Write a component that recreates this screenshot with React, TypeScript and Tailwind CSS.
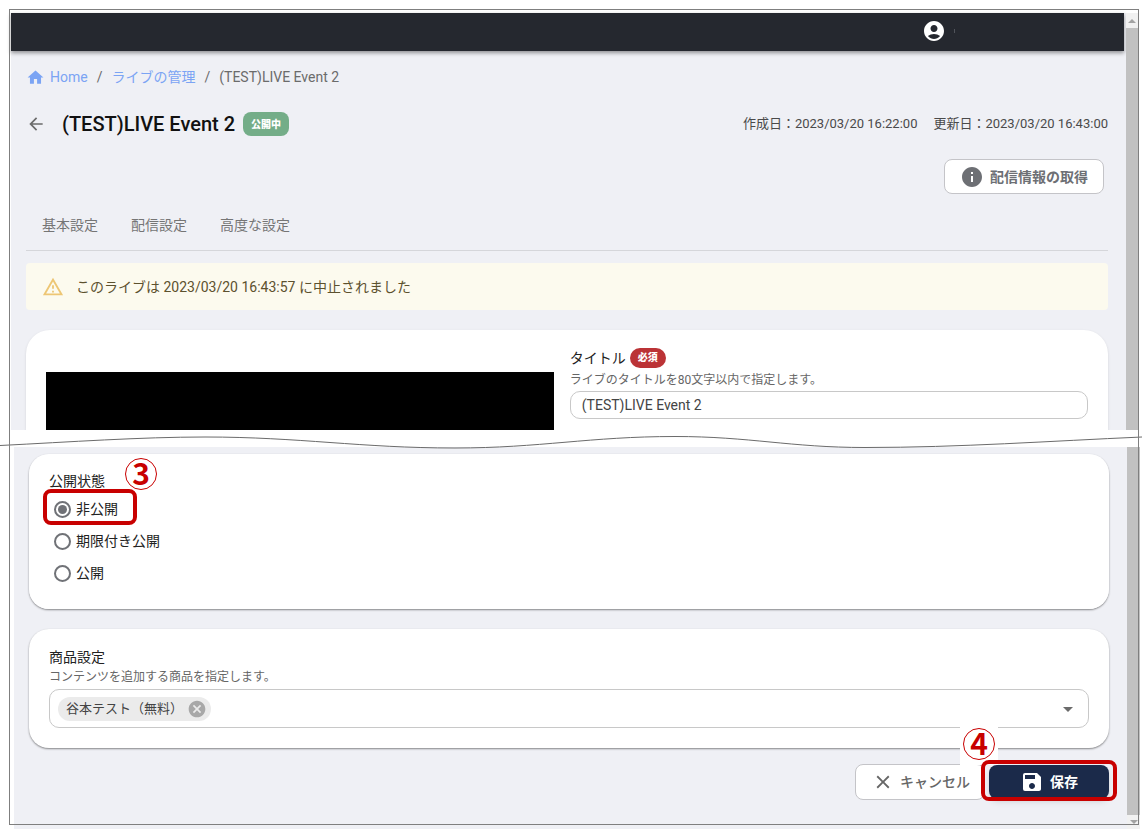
import { useState } from "react";
import type { ReactNode } from "react";
import {
  MdAccountCircle,
  MdArrowBack,
  MdArrowDropDown,
  MdCancel,
  MdClose,
  MdHome,
  MdInfo,
  MdOutlineReportProblem,
  MdSave,
} from "react-icons/md";

const TABS = ["基本設定", "配信設定", "高度な設定"];

const STATUSES = [
  { value: "private", label: "非公開" },
  { value: "limited", label: "期限付き公開" },
  { value: "public", label: "公開" },
];

function StepNumber({ children }: { children: ReactNode }) {
  return (
    <span className="flex size-8 items-center justify-center rounded-full border border-[#c80000] bg-white pb-1 font-['Noto_Sans_CJK_JP',sans-serif] text-[30px] leading-none font-bold text-[#c80000]">
      {children}
    </span>
  );
}

function Highlight({ className }: { className: string }) {
  return (
    <span
      className={`pointer-events-none absolute rounded-lg border-4 border-[#c80000] ${className}`}
    />
  );
}

function ScrollArrow({ down }: { down?: boolean }) {
  return (
    <svg viewBox="0 0 8 4" className="h-1 w-2 fill-[#a3a3a3]" aria-hidden="true">
      <path d={down ? "M0 0h8L4 4z" : "M0 4h8L4 0z"} />
    </svg>
  );
}

function Breadcrumbs() {
  return (
    <nav className="flex h-5 items-center text-sm text-[#6b6b6b]">
      <a href="#home" className="flex items-center gap-[5px] text-[#7ba4f4]">
        <MdHome className="size-[19px]" />
        Home
      </a>
      <span className="mx-[9px]">/</span>
      <a href="#lives" className="text-[#7ba4f4]">
        ライブの管理
      </a>
      <span className="mx-[9px]">/</span>
      <span>(TEST)LIVE Event 2</span>
    </nav>
  );
}

function TitleRow() {
  return (
    <div className="mt-[23px] flex h-7 items-center">
      <button type="button" aria-label="戻る" className="text-[#6b6b6b]">
        <MdArrowBack className="size-5" />
      </button>
      <h1 className="ml-4 text-xl font-medium text-[#111]">(TEST)LIVE Event 2</h1>
      <span className="ml-2 flex h-6 items-center rounded-lg bg-[#74ad88] px-2 text-[10px] font-black text-white">
        公開中
      </span>
      <div className="ml-auto flex gap-4 text-[13px] text-[#4a4a4a]">
        <span>作成日：2023/03/20 16:22:00</span>
        <span>更新日：2023/03/20 16:43:00</span>
      </div>
    </div>
  );
}

function TitleCard() {
  const [title, setTitle] = useState("(TEST)LIVE Event 2");

  return (
    <div className="mt-5 grid grid-cols-[49fr_50fr] gap-4 rounded-t-3xl bg-white px-5 pt-4 shadow">
      <div className="mt-[26px] h-[58px] bg-black" />
      <div>
        <div className="flex h-6 items-center gap-1 text-sm text-[#222]">
          <label htmlFor="title">タイトル</label>
          <span className="flex h-5 items-center rounded-full bg-[#bb3336] px-2 text-[10px] font-black text-white">
            必須
          </span>
        </div>
        <p className="text-xs leading-5 text-[#666]">ライブのタイトルを80文字以内で指定します。</p>
        <input
          id="title"
          value={title}
          onChange={(e) => setTitle(e.target.value)}
          className="mt-px block h-7 w-full rounded-[10px] border border-[#c8c8c8] px-[11px] text-sm text-[#444]"
        />
      </div>
    </div>
  );
}

function StatusCard() {
  const [status, setStatus] = useState("private");

  return (
    <fieldset className="relative rounded-[20px] bg-white px-5 pt-[17px] pb-5 shadow-[0_1px_2px_rgba(0,0,0,0.45)]">
      <legend className="float-left mb-[2px] w-full text-sm leading-5 text-[#222]">公開状態</legend>
      <div className="clear-both">
        {STATUSES.map((s) => (
          <label key={s.value} className="flex h-8 items-center gap-[5px] pl-[5px] text-sm text-[#222]">
            <input
              type="radio"
              name="status"
              value={s.value}
              checked={status === s.value}
              onChange={() => setStatus(s.value)}
              className="size-[17px] appearance-none rounded-full border-2 border-[#707277] bg-clip-content p-[2px] checked:bg-[#707277]"
            />
            {s.label}
          </label>
        ))}
      </div>
      <Highlight className="top-[35px] left-[14px] h-9 w-[94px]" />
      <div className="absolute top-1 left-24">
        <StepNumber>3</StepNumber>
      </div>
    </fieldset>
  );
}

function ProductCard() {
  return (
    <section className="mt-5 rounded-[20px] bg-white px-5 pt-[18px] pb-5 shadow-[0_1px_2px_rgba(0,0,0,0.45)]">
      <label htmlFor="products" className="block text-sm leading-5 text-[#222]">
        商品設定
      </label>
      <p className="text-xs leading-5 text-[#666]">コンテンツを追加する商品を指定します。</p>
      <div className="mt-0.5 flex h-[39px] items-center rounded-[10px] border border-[#c8c8c8] px-2">
        <span className="flex h-6 items-center gap-1 rounded-full bg-[#ebebeb] pr-1 pl-2 text-[13px] text-[#444]">
          谷本テスト（無料）
          <button type="button" aria-label="削除" className="text-[#a8a8a8]">
            <MdCancel className="size-5" />
          </button>
        </span>
        <input id="products" role="combobox" className="h-full min-w-0 flex-1 outline-none" />
        <button type="button" aria-label="開く" className="text-[#6b6b6b]">
          <MdArrowDropDown className="size-6" />
        </button>
      </div>
    </section>
  );
}

function Actions() {
  return (
    <div className="relative mt-4 flex items-center justify-end">
      <button
        type="button"
        className="flex h-9 items-center gap-1.5 rounded-lg border border-[#c4c4c8] bg-white pr-3.5 pl-4 text-sm font-medium text-[#666]"
      >
        <MdClose className="size-[22px]" />
        キャンセル
      </button>
      <button
        type="button"
        className="ml-1 flex h-[34px] w-[120px] items-center justify-center gap-1.5 rounded-lg bg-[#1b2a4a] text-sm font-bold text-white shadow-md"
      >
        <MdSave className="size-6" />
        保存
      </button>
      <div className="absolute -top-[37px] right-[111px] bg-white px-[3px] pt-px pb-[5px]">
        <StepNumber>4</StepNumber>
      </div>
      <Highlight className="-top-1 -right-2 h-[41px] w-[136px]" />
    </div>
  );
}

export default function App() {
  return (
    <div className="relative min-h-screen bg-white pt-[13px] font-[Roboto,'Noto_Sans_CJK_JP',sans-serif]">
      <div className="mr-1 ml-[11px] flex">
        <div className="min-w-0 flex-1 bg-[#eff0f5]">
          <header className="mr-0.5 flex h-[38px] items-center justify-end bg-[#25282f] pr-[169px] pb-[2px] text-white shadow-[0_2px_4px_rgba(0,0,0,0.4)]">
            <MdAccountCircle className="size-6" />
            <span className="ml-2 h-1 w-px bg-[#50535a]" />
          </header>
          <main className="pt-4 pr-[18px] pl-[15px]">
            <Breadcrumbs />
            <TitleRow />
            <div className="mt-[21px] flex justify-end pr-1">
              <button
                type="button"
                className="flex h-[35px] items-center gap-1.5 rounded-lg border border-[#c4c4c8] bg-white px-[15px] text-sm font-bold text-[#6d6f74]"
              >
                <MdInfo className="size-6" />
                配信情報の取得
              </button>
            </div>
            <div className="mt-[6px] flex h-[51px] items-center gap-[33px] border-b border-[#d5d6da] px-4 text-sm text-[#757575]">
              {TABS.map((tab) => (
                <button key={tab} type="button">
                  {tab}
                </button>
              ))}
            </div>
            <div className="mt-3 flex h-[47px] items-center gap-3 rounded bg-[#fcfaee] px-4 text-sm text-[#5c512e]">
              <MdOutlineReportProblem className="size-[22px] text-[#edc674]" />
              <span>このライブは 2023/03/20 16:43:57 に中止されました</span>
            </div>
            <TitleCard />
          </main>
        </div>
        <div className="flex w-3 flex-col bg-[#c1c1c1]">
          <div className="flex h-[15px] items-center justify-center bg-[#f1f1f1]">
            <ScrollArrow />
          </div>
        </div>
      </div>

      {/* page break */}
      <div className="relative z-10 bg-white">
        <svg
          viewBox="0 0 1142 17"
          preserveAspectRatio="none"
          className="block h-[17px] w-full overflow-visible"
          aria-hidden="true"
        >
          <path
            d="M0 15.5C70 12 140 7 205 7C300 7 360 18 455 18C540 18 590 6.500 675 6.500C750 6.500 790 17.500 865 17.500C960 17.500 1050 11 1142 7"
            fill="none"
            stroke="#6b6b6b"
          />
        </svg>
      </div>

      <div className="mr-0.5 ml-[14px] flex">
        <div className="min-w-0 flex-1 bg-[#eff0f5] pt-[7px] pr-[18px] pb-[29px] pl-[15px]">
          <StatusCard />
          <ProductCard />
          <Actions />
        </div>
        <div className="flex w-[13px] flex-col bg-[#c1c1c1]">
          <div className="mt-auto flex h-[14px] items-center justify-center bg-[#f1f1f1]">
            <ScrollArrow down />
          </div>
        </div>
      </div>

      <div className="pointer-events-none absolute top-[9px] right-[3px] bottom-[6px] left-[9px] z-20 border border-[#7f7f7f]" />
    </div>
  );
}
